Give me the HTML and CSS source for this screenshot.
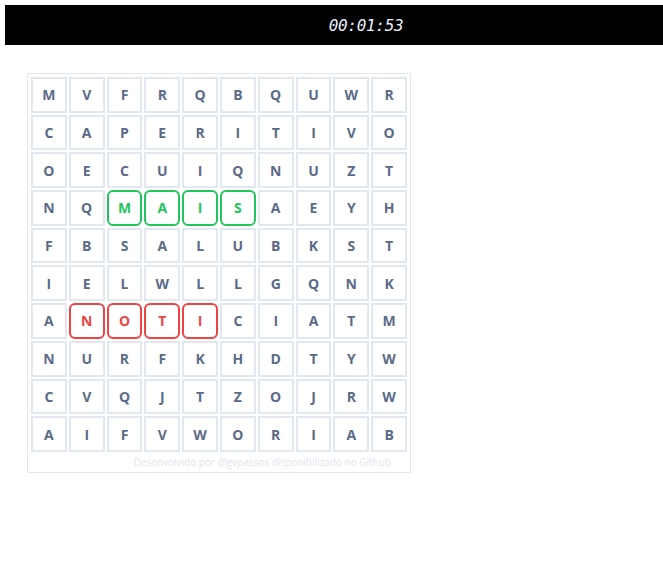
FILE: index.html
```html
<!DOCTYPE html>
<html lang="pt">
<head>
<meta charset="utf-8">
<title>Caça-palavras</title>
<link rel="stylesheet" href="styles.css">
</head>
<body>
<header class="timer-bar"><span class="timer">00:01:53</span></header>
<main class="board">
  <div class="grid">
    <div class="cell">M</div><div class="cell">V</div><div class="cell">F</div><div class="cell">R</div><div class="cell">Q</div><div class="cell">B</div><div class="cell">Q</div><div class="cell">U</div><div class="cell">W</div><div class="cell">R</div>
    <div class="cell">C</div><div class="cell">A</div><div class="cell">P</div><div class="cell">E</div><div class="cell">R</div><div class="cell">I</div><div class="cell">T</div><div class="cell">I</div><div class="cell">V</div><div class="cell">O</div>
    <div class="cell">O</div><div class="cell">E</div><div class="cell">C</div><div class="cell">U</div><div class="cell">I</div><div class="cell">Q</div><div class="cell">N</div><div class="cell">U</div><div class="cell">Z</div><div class="cell">T</div>
    <div class="cell">N</div><div class="cell">Q</div><div class="cell found">M</div><div class="cell found">A</div><div class="cell found">I</div><div class="cell found">S</div><div class="cell">A</div><div class="cell">E</div><div class="cell">Y</div><div class="cell">H</div>
    <div class="cell">F</div><div class="cell">B</div><div class="cell">S</div><div class="cell">A</div><div class="cell">L</div><div class="cell">U</div><div class="cell">B</div><div class="cell">K</div><div class="cell">S</div><div class="cell">T</div>
    <div class="cell">I</div><div class="cell">E</div><div class="cell">L</div><div class="cell">W</div><div class="cell">L</div><div class="cell">L</div><div class="cell">G</div><div class="cell">Q</div><div class="cell">N</div><div class="cell">K</div>
    <div class="cell">A</div><div class="cell wrong">N</div><div class="cell wrong">O</div><div class="cell wrong">T</div><div class="cell wrong">I</div><div class="cell">C</div><div class="cell">I</div><div class="cell">A</div><div class="cell">T</div><div class="cell">M</div>
    <div class="cell">N</div><div class="cell">U</div><div class="cell">R</div><div class="cell">F</div><div class="cell">K</div><div class="cell">H</div><div class="cell">D</div><div class="cell">T</div><div class="cell">Y</div><div class="cell">W</div>
    <div class="cell">C</div><div class="cell">V</div><div class="cell">Q</div><div class="cell">J</div><div class="cell">T</div><div class="cell">Z</div><div class="cell">O</div><div class="cell">J</div><div class="cell">R</div><div class="cell">W</div>
    <div class="cell">A</div><div class="cell">I</div><div class="cell">F</div><div class="cell">V</div><div class="cell">W</div><div class="cell">O</div><div class="cell">R</div><div class="cell">I</div><div class="cell">A</div><div class="cell">B</div>
  </div>
  <p class="credits">Desenvolvido por @gvpassos disponibilizado no Github</p>
</main>
</body>
</html>
```

FILE: styles.css
```css
html, body {
  overflow: hidden;
}
body {
  margin: 5px 0 0 5px;
  background: #ffffff;
  font-family: "Open Sans", "Liberation Sans", sans-serif;
}
.timer-bar {
  height: 40px;
  background: #000000;
  display: flex;
  align-items: center;
  justify-content: center;
  padding-left: 64px;
}
.timer {
  font-family: "DejaVu Sans Mono", monospace;
  font-style: italic;
  font-size: 16px;
  letter-spacing: -0.3px;
  color: #e9f1ff;
  font-weight: 400;
}
.board {
  margin: 28px 0 0 22px;
  width: 378px;
  padding: 2px 2px 0 2px;
  border: 1px solid #e2e8f0;
}
.grid {
  display: grid;
  grid-template-columns: repeat(10, 1fr);
}
.cell {
  margin: 1px;
  height: 35.7px;
  box-sizing: border-box;
  border: 2px solid #e2e8f0;
  display: flex;
  align-items: center;
  justify-content: center;
  font-weight: 700;
  font-size: 14px;
  color: #5b6b87;
}
.cell.found {
  border-color: #22c55e;
  border-radius: 6px;
  color: #22c55e;
}
.cell.wrong {
  border-color: #ef4444;
  border-radius: 6px;
  color: #ef4444;
}
.credits {
  margin: 0;
  height: 19px;
  line-height: 18px;
  text-align: right;
  padding-right: 17px;
  font-size: 10px;
  color: #dfe5ee;
}
```
